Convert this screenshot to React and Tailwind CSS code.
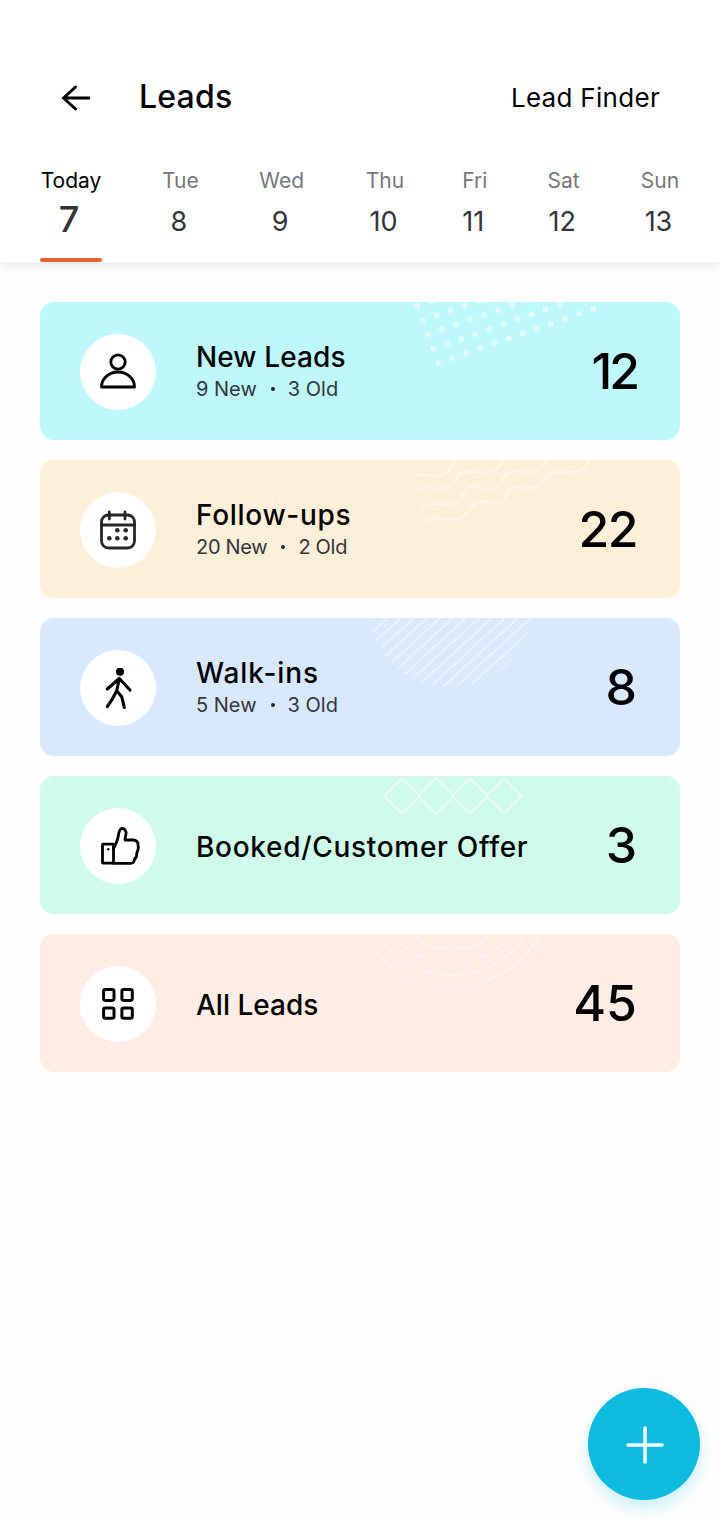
const font = { fontFamily: '"Inter", "Noto Sans", sans-serif' };

const tabs = [
  { d: "Today", n: "7", w: "w-[62px] mr-[-2px]", active: true },
  { d: "Tue", n: "8", w: "w-[35px]" },
  { d: "Wed", n: "9", w: "w-[44px] mr-[1px] ml-[-1px]" },
  { d: "Thu", n: "10", w: "w-[35px]" },
  { d: "Fri", n: "11", w: "w-[21px] ml-[-1px]" },
  { d: "Sat", n: "12", w: "w-[31px]" },
  { d: "Sun", n: "13", w: "w-[36px]" },
];

function Dots() {
  const rows = [2, 5, 8, 10, 12];
  const pts = [];
  rows.forEach((count, b) => {
    for (let i = 0; i < count; i++) {
      pts.push([377.3 + 14.1 * i + 5.2 * b, 4 - 4.9 * i + 14.2 * b]);
    }
  });
  return (
    <svg className="absolute inset-0" width="640" height="138" fill="#fff" opacity="0.55">
      {pts.map(([x, y], i) => (
        <circle key={i} cx={x} cy={y} r="2.9" />
      ))}
    </svg>
  );
}

function Waves() {
  return (
    <svg className="absolute inset-0" width="640" height="138" fill="none" stroke="#fff" strokeWidth="2.4" strokeLinecap="round" opacity="0.42">
      <path d="M372 17q9 -4 18 -2t17 -3c4 -2 5 -6 8 -12" />
      <path d="M377 30q9 -4 18 -2t17 -3c4 -2 5 -8 8 -12q9 -3 18 -1t17 -2c4 -2 5 -6 8 -10" />
      <path d="M382 47q9 -5 18 -3t18 -2c4 -2 5 -10 9 -14q8 -3 15 0t15 -1c4 -2 6 -10 11 -14q8 -3 16 -1t16 -3c4 -2 5 -6 8 -10" />
      <path d="M385 62q9 -5 18 -3t19 -2c5 -3 9 -12 15 -15q7 -2 13 1t13 -1c3 -3 4 -10 7 -14q7 -2 14 0t13 -1c5 -2 8 -10 13 -14q8 -3 17 -1t16 -3c4 -2 5 -5 7 -10" />
    </svg>
  );
}

function Stripes() {
  const lines = [];
  for (let i = 0; i < 28; i++) lines.push(250 + i * 13);
  return (
    <svg className="absolute inset-0" width="640" height="138" stroke="#fff" strokeWidth="1.6">
      <defs>
        <clipPath id="stripe-clip">
          <circle cx="410" cy="-14" r="83" />
        </clipPath>
      </defs>
      <circle cx="410" cy="-14" r="83" fill="#fff" fillOpacity="0.05" stroke="none" />
      <g clipPath="url(#stripe-clip)" opacity="0.45">
        {lines.map((x) => (
          <line key={x} x1={x} y1="90" x2={x + 100} y2="-2" />
        ))}
      </g>
    </svg>
  );
}

function Diamonds() {
  return (
    <svg className="absolute inset-0" width="640" height="138" fill="none" stroke="#fff" strokeWidth="2" opacity="0.5">
      {[362, 396, 430, 464].map((x) => (
        <rect key={x} x={x - 12.5} y={20 - 12.5} width="25" height="25" rx="2" transform={`rotate(45 ${x} 20)`} />
      ))}
    </svg>
  );
}

function Arcs() {
  return (
    <svg className="absolute inset-0" width="640" height="138" fill="none" stroke="#fff" strokeWidth="1.8" opacity="0.33">
      {[61.6, 75.6, 87.6, 99.6].map((r) => (
        <circle key={r} cx="412" cy="-46.6" r={r} />
      ))}
    </svg>
  );
}

function Icon({ name }) {
  return (
    <svg width="76" height="76" viewBox="0 0 76 76" fill="none" strokeLinecap="round" strokeLinejoin="round">
      {name === "person" && (
        <g stroke="#000" strokeWidth="2.8">
          <circle cx="38" cy="28" r="7.2" />
          <path d="M21.5 53a16.5 15 0 0 1 33 0z" />
        </g>
      )}
      {name === "calendar" && (
        <g stroke="#26262b" strokeWidth="2.8">
          <rect x="21.5" y="23" width="33" height="33" rx="7" />
          <path d="M29.3 20v7M45 20v7M21.5 33h33" />
          <g fill="#26262b" stroke="none">
            <circle cx="37.3" cy="38.3" r="2.3" />
            <circle cx="45.7" cy="38.3" r="2.3" />
            <circle cx="29.3" cy="46.3" r="2.3" />
            <circle cx="37.3" cy="46.3" r="2.3" />
            <circle cx="45.7" cy="46.3" r="2.3" />
          </g>
        </g>
      )}
      {name === "walk" && (
        <g stroke="#000" strokeWidth="3.1">
          <circle cx="40" cy="21.7" r="4" fill="#000" stroke="none" />
          <path d="M27.3 39L39.3 28.5L50 40M39.3 28.5L36.7 40.7L32.7 48.3L27.3 56.7M36.7 40.7L41.7 46.7L44.3 57.5" />
        </g>
      )}
      {name === "thumb" && (
        <g stroke="#000" strokeWidth="2.8">
          <rect x="22.5" y="36.2" width="11" height="19" rx="0.6" />
          <circle cx="28.3" cy="41.3" r="1.2" fill="#000" stroke="none" />
          <path d="M33.5 40.5C36 36 37.5 33 38.3 28C39 23 40 20.5 42 20.5C45 20.5 46.5 23.5 46 26C45.6 28.5 45 30 45 32H53C56.5 32 58.5 34.5 58 37C59 40 58 42.5 56.7 45.3C57 48 56 50 54.5 51C54.5 54 53 55.3 50.5 55.3H33.5" />
        </g>
      )}
      {name === "grid" && (
        <g stroke="#000" strokeWidth="3">
          <rect x="23.6" y="23.6" width="10.4" height="10.8" rx="1.8" />
          <rect x="41.9" y="23.6" width="10.4" height="10.8" rx="1.8" />
          <rect x="23.6" y="41.9" width="10.4" height="10.4" rx="1.8" />
          <rect x="41.9" y="41.9" width="10.4" height="10.4" rx="1.8" />
        </g>
      )}
    </svg>
  );
}

function Card({ bg, icon, title, titleClass, sub, subClass, count, countClass, Pattern }) {
  return (
    <div className={`relative flex h-[138px] items-center overflow-hidden rounded-[14px] pl-[40px] pr-[43px] ${bg}`}>
      <Pattern />
      <div className="relative mt-[2px] flex h-[76px] w-[76px] shrink-0 items-center justify-center rounded-full bg-white">
        <Icon name={icon} />
      </div>
      <div className={`relative ml-[40px] flex min-w-0 flex-1 flex-col ${sub ? "mt-[-1px]" : "mt-[3px]"}`}>
        <div className={`whitespace-nowrap text-[28px] font-medium leading-[36px] text-black ${titleClass}`}>{title}</div>
        {sub && (
          <div className={`flex items-center whitespace-nowrap text-[20px] leading-[28px] text-[#33363d] ${subClass}`}>
            <span>{sub.a}</span>
            <span className="ml-[14px] mr-[13px] h-[4px] w-[4px] rounded-full bg-[#22252b]" />
            <span>{sub.b}</span>
          </div>
        )}
      </div>
      <div className={`relative whitespace-nowrap text-[50px] font-[550] leading-none text-black ${countClass}`}>{count}</div>
    </div>
  );
}

export default function App() {
  return (
    <div style={font} className="relative h-[1520px] w-[720px] overflow-hidden bg-[#fefefe]">
      <header className="relative flex h-[262px] flex-col bg-white shadow-[0_3px_10px_rgba(0,0,0,0.09)]">
        <div className="mt-[72px] flex h-[50px] items-center pl-[62px] pr-[60px]">
          <svg className="mt-[2px]" width="28" height="26" viewBox="0 0 28 26" fill="none" stroke="#000" strokeWidth="3" strokeLinecap="round" strokeLinejoin="round">
            <path d="M1.5 13H27M13.5 2L1.5 13L13.5 24" />
          </svg>
          <h1 className="ml-[49px] text-[32px] font-medium tracking-[0.2px] text-black">Leads</h1>
          <div className="ml-auto mt-[1px] text-[26px] tracking-[0.3px] text-black">Lead Finder</div>
        </div>
        <nav className="mt-[44px] flex flex-1 justify-between pl-[40px] pr-[42px]">
          {tabs.map((t) => (
            <div key={t.d} className={`relative flex flex-col items-center ${t.w}`}>
              <span className={`whitespace-nowrap text-[21px] leading-[30px] ${t.active ? "text-black" : "text-[#77777c]"}`}>{t.d}</span>
              <span
                className={`whitespace-nowrap leading-[40px] text-[#333338] ${
                  t.active ? "mr-[4px] mt-[3px] text-[36px] font-medium" : "mr-[3px] mt-[6px] text-[27px]"
                }`}
              >
                {t.n}
              </span>
              {t.active && <span className="absolute bottom-0 left-0 h-[4px] w-[62px] rounded-full bg-[#e4643a]" />}
            </div>
          ))}
        </nav>
      </header>

      <main className="flex flex-col gap-[20px] px-[40px] pt-[40px]">
        <Card bg="bg-[#bef8fb]" icon="person" title="New Leads" titleClass="tracking-[0.1px]" sub={{ a: "9 New", b: "3 Old" }} subClass="" count="12" countClass="tracking-[-3px]" Pattern={Dots} />
        <Card bg="bg-[#fef0d8]" icon="calendar" title="Follow-ups" titleClass="tracking-[0.7px]" sub={{ a: "20 New", b: "2 Old" }} subClass="tracking-[-0.3px]" count="22" countClass="tracking-[-1.5px]" Pattern={Waves} />
        <Card bg="bg-[#d8e8fe]" icon="walk" title="Walk-ins" titleClass="tracking-[0.9px]" sub={{ a: "5 New", b: "3 Old" }} subClass="" count="8" countClass="" Pattern={Stripes} />
        <Card bg="bg-[#d0faea]" icon="thumb" title="Booked/Customer Offer" titleClass="tracking-[0.7px]" count="3" countClass="" Pattern={Diamonds} />
        <Card bg="bg-[#ffede5]" icon="grid" title="All Leads" titleClass="" count="45" countClass="" Pattern={Arcs} />
      </main>

      <button className="absolute left-[588px] top-[1388px] flex h-[112px] w-[112px] items-center justify-center rounded-full bg-[#0dbbe0] shadow-[0_8px_16px_rgba(13,187,224,0.22)]">
        <svg className="translate-x-px translate-y-px" width="40" height="40" viewBox="0 0 40 40" fill="none" stroke="#fff" strokeWidth="3.5" strokeLinecap="round">
          <path d="M20 3V37M3 20H37" />
        </svg>
      </button>
    </div>
  );
}
